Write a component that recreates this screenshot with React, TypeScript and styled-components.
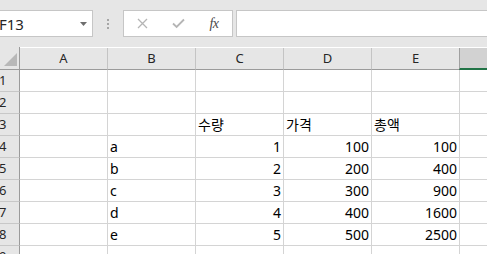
import React from "react";
import styled, { createGlobalStyle } from "styled-components";

const Global = createGlobalStyle`
  html, body { margin: 0; padding: 0; background: #ffffff; overflow: hidden; }
  body { width: 487px; height: 254px; font-family: "Noto Sans", "Noto Sans CJK KR", sans-serif; }
  * { box-sizing: border-box; }
`;

const Page = styled.div`
  width: 487px;
  height: 254px;
  overflow: hidden;
  display: flex;
  flex-direction: column;
`;

const FormulaArea = styled.div`
  height: 47px;
  flex: none;
  background: #e6e6e6;
  display: flex;
  align-items: flex-start;
  padding-top: 10px;
`;

const NameBox = styled.div`
  width: 93px;
  height: 27px;
  background: #ffffff;
  border: 1px solid #c6c6c6;
  border-left: none;
  display: flex;
  align-items: center;
  justify-content: space-between;
  padding-right: 5px;
  font-size: 15px;
  color: #262626;
  text-indent: -1px;
`;

const NameText = styled.span`
  line-height: 1;
  padding-top: 1px;
`;

const Separator = styled.div`
  width: 30px;
  height: 27px;
  display: flex;
  flex-direction: column;
  align-items: center;
  justify-content: center;
  gap: 2px;
`;

const Dot = styled.span`
  width: 2px;
  height: 2px;
  background: #a6a6a6;
`;

const FxBox = styled.div`
  width: 110px;
  height: 27px;
  background: #ffffff;
  border: 1px solid #c6c6c6;
  display: grid;
  grid-template-columns: repeat(3, 36px);
  align-items: center;
  justify-items: center;
`;

const FxLabel = styled.span`
  font-family: "Liberation Serif", "DejaVu Serif", serif;
  font-style: italic;
  font-size: 14px;
  color: #4a4a4a;
  line-height: 1;
  letter-spacing: -0.5px;
`;

const FormulaInput = styled.div`
  flex: 1;
  margin-left: 3px;
  height: 27px;
  background: #ffffff;
  border: 1px solid #c6c6c6;
  border-right: none;
`;

const Sheet = styled.div`
  display: grid;
  grid-template-columns: 20px repeat(6, 88px);
  grid-template-rows: 23px;
  grid-auto-rows: 22px;
`;

const Corner = styled.div`
  background: #e6e6e6;
  border-right: 1px solid #9b9b9b;
  border-bottom: 1px solid #9b9b9b;
  display: flex;
  align-items: flex-end;
  justify-content: flex-end;
  padding: 0 2px 3px 0;
`;

const ColHeader = styled.div<{ $active?: boolean }>`
  background: ${(p) => (p.$active ? "#d2d2d2" : "#e6e6e6")};
  border-right: 1px solid #c4c4c4;
  border-bottom: ${(p) => (p.$active ? "2px solid #217346" : "1px solid #9b9b9b")};
  border-left: ${(p) => (p.$active ? "1px solid #a0a0a0" : "none")};
  margin-left: ${(p) => (p.$active ? "-1px" : "0")};
  margin-top: 1px;
  display: flex;
  align-items: center;
  justify-content: center;
  font-size: 13px;
  color: #262626;
  line-height: 1;
`;

const RowHeader = styled.div`
  background: #e6e6e6;
  border-right: 1px solid #9b9b9b;
  border-bottom: 1px solid #c8c8c8;
  display: flex;
  align-items: center;
  font-size: 13px;
  color: #262626;
  line-height: 1;
  text-indent: -1px;
`;

const Cell = styled.div<{ $num?: boolean }>`
  border-right: 1px solid #d4d4d4;
  border-bottom: 1px solid #d4d4d4;
  display: flex;
  align-items: flex-end;
  justify-content: ${(p) => (p.$num ? "flex-end" : "flex-start")};
  padding: 0 2px 3px 2px;
  font-size: 14px;
  line-height: 1;
  color: #000000;
  white-space: nowrap;
`;

const cols = ["A", "B", "C", "D", "E", "F"];

type Row = (string | number | null)[];

const rows: Row[] = [
  [null, null, null, null, null, null],
  [null, null, null, null, null, null],
  [null, null, "수량", "가격", "총액", null],
  [null, "a", 1, 100, 100, null],
  [null, "b", 2, 200, 400, null],
  [null, "c", 3, 300, 900, null],
  [null, "d", 4, 400, 1600, null],
  [null, "e", 5, 500, 2500, null],
  [null, null, null, null, null, null],
];

const CloseIcon = () => (
  <svg width="11" height="11" viewBox="0 0 11 11">
    <path d="M1 1 L10 10 M10 1 L1 10" stroke="#b5b5b5" strokeWidth="1.3" fill="none" />
  </svg>
);

const CheckIcon = () => (
  <svg width="13" height="11" viewBox="0 0 13 11">
    <path d="M1 5.5 L4.6 9 L12 1.5" stroke="#b5b5b5" strokeWidth="1.8" fill="none" />
  </svg>
);

const DropArrow = () => (
  <svg width="7" height="4" viewBox="0 0 7 4">
    <path d="M0 0 L7 0 L3.5 4 Z" fill="#6e6e6e" />
  </svg>
);

const CornerTriangle = () => (
  <svg width="13" height="13" viewBox="0 0 13 13">
    <path d="M13 0 L13 13 L0 13 Z" fill="#b8b8b8" />
  </svg>
);

export default function App() {
  return (
    <Page>
      <Global />
      <FormulaArea>
        <NameBox>
          <NameText>F13</NameText>
          <DropArrow />
        </NameBox>
        <Separator>
          <Dot />
          <Dot />
          <Dot />
        </Separator>
        <FxBox>
          <CloseIcon />
          <CheckIcon />
          <FxLabel>fx</FxLabel>
        </FxBox>
        <FormulaInput />
      </FormulaArea>
      <Sheet>
        <Corner>
          <CornerTriangle />
        </Corner>
        {cols.map((c) => (
          <ColHeader key={c} $active={c === "F"}>
            {c}
          </ColHeader>
        ))}
        {rows.map((r, i) => (
          <React.Fragment key={i}>
            <RowHeader>{i + 1}</RowHeader>
            {r.map((v, j) => (
              <Cell key={j} $num={typeof v === "number"}>
                {v ?? ""}
              </Cell>
            ))}
          </React.Fragment>
        ))}
      </Sheet>
    </Page>
  );
}
